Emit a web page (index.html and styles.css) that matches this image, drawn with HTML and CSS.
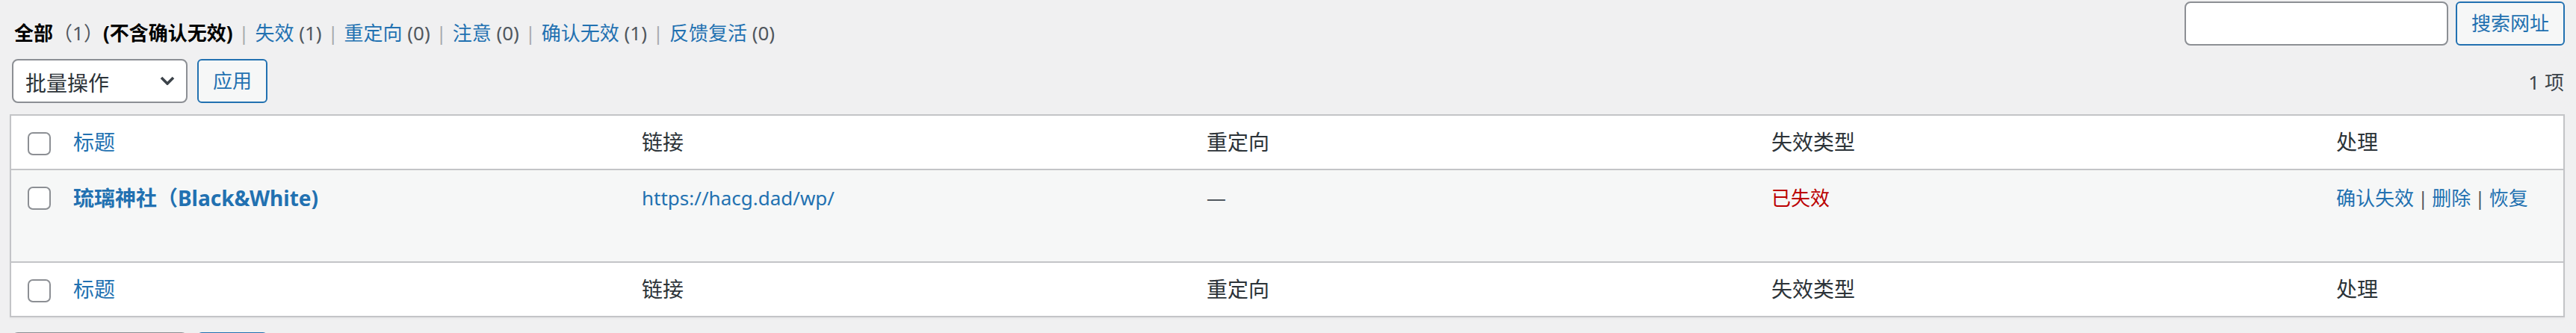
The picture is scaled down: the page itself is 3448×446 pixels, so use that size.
FILE: index.html
```html
<!DOCTYPE html>
<html lang="zh-CN">
<head>
<meta charset="utf-8">
<title>失效链接</title>
<link rel="stylesheet" href="styles.css">
</head>
<body>
<div class="wrap">
  <div class="top">
    <ul class="subsubsub">
      <li><b class="current">全部</b><span class="count">（1）</span><b class="current">(不含确认无效)</b> <span class="sep">|</span></li>
      <li><a href="#">失效</a> <span class="count">(1)</span> <span class="sep">|</span></li>
      <li><a href="#">重定向</a> <span class="count">(0)</span> <span class="sep">|</span></li>
      <li><a href="#">注意</a> <span class="count">(0)</span> <span class="sep">|</span></li>
      <li><a href="#">确认无效</a> <span class="count">(1)</span> <span class="sep">|</span></li>
      <li><a href="#">反馈复活</a> <span class="count">(0)</span></li>
    </ul>
    <form class="search-box">
      <input class="search-input" type="search">
      <button class="button" type="button">搜索网址</button>
    </form>
  </div>

  <div class="tablenav">
    <div class="bulk">
      <div class="select">
        <span>批量操作</span>
        <svg class="chev" width="20" height="12" viewBox="0 0 20 12"><path d="M2 2 L10 10 L18 2" fill="none" stroke="#3c434a" stroke-width="3.6"/></svg>
      </div>
      <button class="button" type="button">应用</button>
    </div>
    <div class="num">1 项</div>
  </div>

  <table class="widefat">
    <colgroup>
      <col class="col-cb">
      <col class="col-title">
      <col class="col-mid">
      <col class="col-mid">
      <col class="col-mid">
      <col class="col-act">
    </colgroup>
    <thead>
      <tr>
        <th class="check"><span class="cb"></span></th>
        <th><a href="#">标题</a></th>
        <th>链接</th>
        <th>重定向</th>
        <th>失效类型</th>
        <th>处理</th>
      </tr>
    </thead>
    <tbody>
      <tr class="list-row">
        <td class="check"><span class="cb"></span></td>
        <td><strong><a class="row-title" href="#">琉璃神社（Black&amp;White)</a></strong></td>
        <td><a href="#">https://hacg.dad/wp/</a></td>
        <td class="muted">—</td>
        <td class="broken">已失效</td>
        <td><a href="#">确认失效</a><span class="bar">|</span><a href="#">删除</a><span class="bar">|</span><a href="#">恢复</a></td>
      </tr>
    </tbody>
    <tfoot>
      <tr>
        <th class="check"><span class="cb"></span></th>
        <th><a href="#">标题</a></th>
        <th>链接</th>
        <th>重定向</th>
        <th>失效类型</th>
        <th>处理</th>
      </tr>
    </tfoot>
  </table>

  <div class="tablenav bottom">
    <div class="bulk">
      <div class="select">
        <span>批量操作</span>
        <svg class="chev" width="20" height="12" viewBox="0 0 20 12"><path d="M2 2 L10 10 L18 2" fill="none" stroke="#3c434a" stroke-width="3.6"/></svg>
      </div>
      <button class="button" type="button">应用</button>
    </div>
  </div>
</div>
</body>
</html>
```

FILE: styles.css
```css
html, body {
  margin: 0;
  padding: 0;
  background: #f0f0f1;
}
body {
  font-family: "Segoe UI", "Noto Sans", "Noto Sans CJK SC", sans-serif;
  font-size: 26px;
  color: #3c434a;
  overflow: hidden;
}
a {
  color: #2271b1;
  text-decoration: none;
}
.wrap {
  padding: 2px 15px 0 13px;
}
.top {
  display: flex;
  justify-content: space-between;
  align-items: flex-start;
  height: 68px;
}
.subsubsub {
  list-style: none;
  margin: 16px 0 0 6px;
  padding: 0;
  line-height: 52px;
  font-size: 26px;
  color: #646970;
  white-space: nowrap;
}
.subsubsub li {
  display: inline;
}
.subsubsub .current {
  color: #000;
  font-weight: 700;
}
.subsubsub .count {
  color: #50575e;
}
.subsubsub .sep {
  color: #a7aaad;
  margin: 0 1px;
}
.search-box {
  display: flex;
  gap: 10px;
  margin: 0;
}
.search-input {
  width: 353px;
  height: 59px;
  box-sizing: border-box;
  border: 2px solid #8c8f94;
  border-radius: 8px;
  background: #fff;
  margin: 0;
  padding: 0 16px;
  font: inherit;
}
.button {
  height: 59px;
  box-sizing: border-box;
  border: 2px solid #2271b1;
  border-radius: 6px;
  background: #f6f7f7;
  color: #2271b1;
  font-family: inherit;
  font-size: 26px;
  padding: 0 19px;
  margin: 0;
  line-height: 55px;
}
.tablenav {
  display: flex;
  justify-content: space-between;
  align-items: center;
  margin-top: 9px;
  height: 59px;
}
.tablenav.bottom {
  margin-top: 20px;
}
.bulk {
  display: flex;
  gap: 13px;
  margin-left: 3px;
}
.select {
  width: 235px;
  height: 59px;
  box-sizing: border-box;
  border: 2px solid #8c8f94;
  border-radius: 8px;
  background: #fff;
  display: flex;
  align-items: center;
  justify-content: space-between;
  padding: 2px 15px 0 16px;
  font-size: 28px;
  color: #2c3338;
}
.chev {
  display: block;
  margin-top: -4px;
}
.num {
  font-size: 26px;
  color: #3c434a;
  margin-right: 1px;
}
.widefat {
  width: 100%;
  table-layout: fixed;
  border-collapse: separate;
  border-spacing: 0;
  border: 2px solid #c3c4c7;
  background: #fff;
  margin-top: 15px;
  box-shadow: 0 2px 2px rgba(0, 0, 0, 0.04);
}
.col-cb { width: 63px; }
.col-title { width: 761px; }
.col-mid { width: 756px; }
.widefat th {
  text-align: left;
  font-weight: 400;
  font-size: 28px;
  line-height: 39px;
  padding: 16px 20px;
  color: #2c3338;
  vertical-align: top;
}
.widefat thead th {
  border-bottom: 2px solid #c3c4c7;
}
.widefat tfoot th {
  border-top: 2px solid #c3c4c7;
}
.widefat td {
  font-size: 26px;
  line-height: 42px;
  padding: 16px 20px 63px;
  vertical-align: top;
  color: #50575e;
  white-space: nowrap;
}
.list-row {
  background: #f6f7f7;
}
.widefat .check {
  padding: 22px 0 0 22px;
}
.cb {
  display: block;
  width: 31px;
  height: 31px;
  box-sizing: border-box;
  border: 2px solid #8c8f94;
  border-radius: 7px;
  background: #fff;
}
.row-title {
  font-size: 28px;
  font-weight: 700;
}
.muted {
  color: #50575e;
}
.widefat td.broken {
  color: #bb0000;
}
.bar {
  color: #50575e;
  margin: 0 5px;
}
```
